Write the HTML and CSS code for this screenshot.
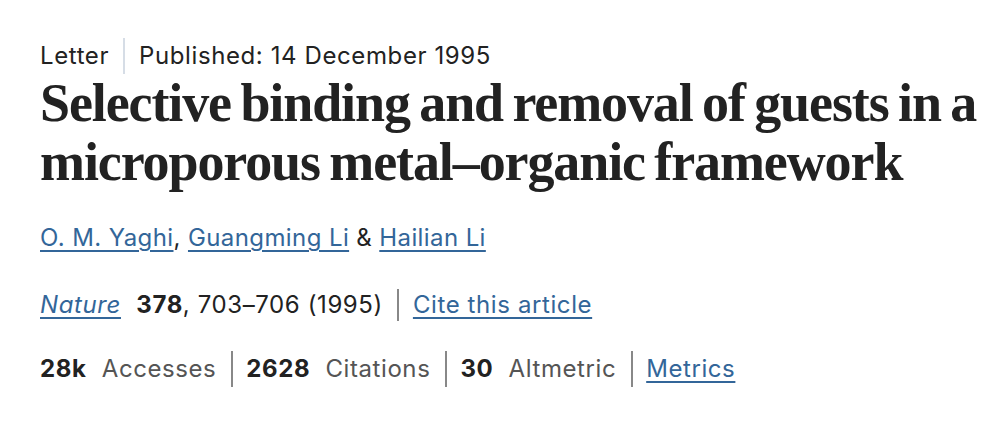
FILE: index.html
```html
<!DOCTYPE html>
<html>
<head>
<meta charset="utf-8">
<link rel="stylesheet" href="styles.css">
</head>
<body>
<header class="article-header">
  <ul class="meta-row">
    <li class="meta-item">Letter</li>
    <li class="meta-item meta-sep-light">Published: <time>14 December 1995</time></li>
  </ul>
  <h1 class="title">Selective binding and removal of guests in a microporous metal–organic framework</h1>
  <p class="authors"><a href="#">O. M. Yaghi</a>, <a href="#">Guangming Li</a> &amp; <a href="#">Hailian Li</a></p>
  <p class="citation"><span class="journal-part"><a href="#"><i>Nature</i></a> <b class="vol">378</b>, 703–706 (1995)</span><span class="cite-sep"></span><a href="#">Cite this article</a></p>
  <ul class="metrics">
    <li class="metric"><b>28k</b> <span class="label">Accesses</span></li>
    <li class="metric sep"><b>2628</b> <span class="label">Citations</span></li>
    <li class="metric sep"><b>30</b> <span class="label">Altmetric</span></li>
    <li class="metric sep"><a href="#">Metrics</a></li>
  </ul>
</header>
</body>
</html>
```
FILE: styles.css
```css
html, body { margin: 0; padding: 0; background: #fff; }
body {
  font-family: Inter, "Liberation Sans", sans-serif;
  color: #222;
  font-size: 24px;
  letter-spacing: 0.6px;
}
.article-header { padding: 38px 20px 0 40px; }
.meta-row {
  list-style: none; margin: 0; padding: 0;
  display: flex; align-items: center;
  line-height: 36px;
}
.meta-sep-light {
  border-left: 2px solid #d6dde6;
  margin-left: 14px; padding-left: 14px;
}
.title {
  font-family: "Liberation Serif", serif;
  font-weight: 700;
  font-size: 54px;
  line-height: 59px;
  letter-spacing: -1.1px;
  word-spacing: -3px;
  margin: 0;
  color: #222;
}
a { color: #336699; text-decoration: underline; text-underline-offset: 4px; text-decoration-thickness: 2px; }
.authors { margin: 28px 0 0 0; line-height: 36px; letter-spacing: 0.4px; }
.citation { margin: 31px 0 0 0; line-height: 36px; display: flex; align-items: center; }
.vol { font-weight: 700; margin-left: 8px; }
.cite-sep { width: 2px; height: 32px; background: #888; margin: 0 14px; }
.metrics { list-style: none; margin: 28px 0 0 0; padding: 0; display: flex; align-items: center; line-height: 36px; letter-spacing: 0.58px; }
.metric b { font-weight: 700; margin-right: 8px; }
.label { color: #555; }
.metric.sep { border-left: 2px solid #888; margin-left: 15px; padding-left: 13px; }
```
